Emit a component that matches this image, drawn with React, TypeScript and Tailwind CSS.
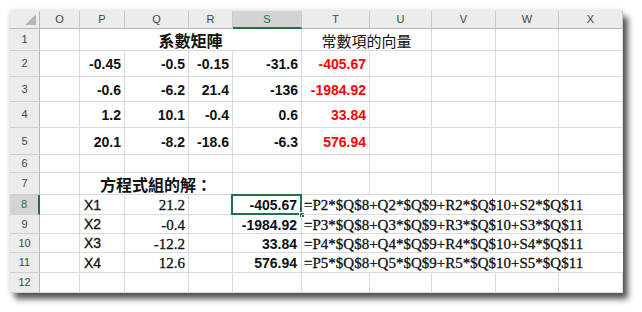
import React from "react";

const sans = "font-['Liberation_Sans',Arial,sans-serif]";
const cjk = "font-['Noto_Sans_CJK_TC','Noto_Sans_CJK_SC',sans-serif]";
const serif = "font-['Liberation_Serif','Times_New_Roman',serif]";

type CellProps = {
  children?: React.ReactNode;
  span?: string;
  cls?: string;
  noRight?: boolean;
};

function Cell({ children, span = "", cls = "", noRight = false }: CellProps) {
  return (
    <div
      className={`relative flex items-center overflow-visible whitespace-nowrap border-b border-[#dadada] ${
        noRight ? "" : "border-r"
      } ${span} ${cls}`}
    >
      {children}
    </div>
  );
}

function ColHead({ label, selected = false }: { label: string; selected?: boolean }) {
  return (
    <div
      className={`flex items-center justify-center text-[11px] ${sans} border-r border-[#c9c9c9] ${
        selected
          ? "bg-[#d4d4d4] text-[#217346] border-b-2 border-b-[#217346]"
          : "bg-[#ececec] text-[#444444] border-b border-b-[#b9b9b9]"
      }`}
    >
      {label}
    </div>
  );
}

function RowHead({ n, selected = false }: { n: number; selected?: boolean }) {
  return (
    <div
      className={`flex items-center justify-center text-[11px] ${sans} border-b border-[#cfcfcf] ${
        selected
          ? "bg-[#d4d4d4] text-[#217346] border-r-2 border-r-[#217346]"
          : "bg-[#ececec] text-[#444444] border-r border-r-[#b9b9b9]"
      }`}
    >
      {n}
    </div>
  );
}

const Num = ({ v, red = false }: { v: string; red?: boolean }) => (
  <Cell cls={`justify-end pr-[3px] pt-[2px] text-[14px] font-bold ${sans} ${red ? "text-[#ff0000]" : "text-[#111111]"}`}>
    {v}
  </Cell>
);

const Empty = () => <Cell />;

const matrix = [
  ["-0.45", "-0.5", "-0.15", "-31.6", "-405.67"],
  ["-0.6", "-6.2", "21.4", "-136", "-1984.92"],
  ["1.2", "10.1", "-0.4", "0.6", "33.84"],
  ["20.1", "-8.2", "-18.6", "-6.3", "576.94"],
];

const sol = [
  ["X1", "21.2", "-405.67", "=P2*$Q$8+Q2*$Q$9+R2*$Q$10+S2*$Q$11"],
  ["X2", "-0.4", "-1984.92", "=P3*$Q$8+Q3*$Q$9+R3*$Q$10+S3*$Q$11"],
  ["X3", "-12.2", "33.84", "=P4*$Q$8+Q4*$Q$9+R4*$Q$10+S4*$Q$11"],
  ["X4", "12.6", "576.94", "=P5*$Q$8+Q5*$Q$9+R5*$Q$10+S5*$Q$11"],
];

export default function App() {
  return (
    <div className="w-[642px] h-[312px] bg-white overflow-hidden pl-[10px] pt-[11px]">
      <div className="w-[613px] h-[282px] bg-white shadow-[5px_6px_6px_rgba(0,0,0,0.65),0_0_5px_rgba(0,0,0,0.18)] grid grid-cols-[30px_40px_45px_64px_44px_69px_68px_62px_64px_63px_64px] grid-rows-[18px_22px_26px_25px_26px_27px_18px_22px_20px_19px_19px_20px_20px]">
        {/* header row */}
        <div className="relative bg-[#ececec] border-r border-b border-[#b9b9b9]">
          <div className="absolute right-[3px] bottom-[3px] w-0 h-0 border-l-[11px] border-l-transparent border-b-[11px] border-b-[#b5b5b5]" />
        </div>
        {["O", "P", "Q", "R", "S", "T", "U", "V", "W", "X"].map((c) => (
          <ColHead key={c} label={c} selected={c === "S"} />
        ))}

        {/* row 1 */}
        <RowHead n={1} />
        <Empty />
        <Cell span="col-span-4" cls={`justify-center text-[16px] font-bold text-[#111] ${cjk}`}>
          系數矩陣
        </Cell>
        <Cell span="col-span-2" cls={`justify-center pt-[3px] text-[15px] text-[#111] ${cjk}`}>
          常數項的向量
        </Cell>
        <Empty />
        <Empty />
        <Empty />

        {/* rows 2-5 */}
        {matrix.map((r, i) => (
          <React.Fragment key={i}>
            <RowHead n={i + 2} />
            <Empty />
            <Num v={r[0]} />
            <Num v={r[1]} />
            <Num v={r[2]} />
            <Num v={r[3]} />
            <Num v={r[4]} red />
            <Empty />
            <Empty />
            <Empty />
            <Empty />
          </React.Fragment>
        ))}

        {/* row 6 */}
        <RowHead n={6} />
        {Array.from({ length: 10 }).map((_, i) => (
          <Empty key={i} />
        ))}

        {/* row 7 */}
        <RowHead n={7} />
        <Empty />
        <Cell span="col-span-3" cls={`justify-center text-[16px] font-bold text-[#111] ${cjk}`}>
          方程式組的解：
        </Cell>
        {Array.from({ length: 6 }).map((_, i) => (
          <Empty key={i} />
        ))}

        {/* rows 8-11 */}
        {sol.map((r, i) => (
          <React.Fragment key={i}>
            <RowHead n={i + 8} selected={i === 0} />
            <Empty />
            <Cell cls={`pl-[4px] pt-[1px] text-[14px] text-[#111] ${sans} [-webkit-text-stroke:0.3px_#111]`}>{r[0]}</Cell>
            <Cell cls={`justify-end pr-[3px] pt-[2px] text-[15px] text-[#111] ${serif} [-webkit-text-stroke:0.3px_#111]`}>{r[1]}</Cell>
            <Empty />
            <Cell cls={`justify-end pr-[4px] pt-[2px] text-[14px] font-bold text-[#111] ${sans}`}>
              {r[2]}
              {i === 0 && (
                <>
                  <div className="absolute left-[-2px] top-[-1px] right-[-1px] bottom-[-1px] border-2 border-[#217346]" />
                  <div className="absolute right-[-4px] bottom-[-4px] w-[6px] h-[6px] bg-[#217346] border border-white" />
                </>
              )}
            </Cell>
            <Cell span="col-span-5" noRight cls={`pl-[2px] pt-[2px] text-[15px] text-[#111] ${serif} [-webkit-text-stroke:0.3px_#111]`}>
              {r[3]}
            </Cell>
          </React.Fragment>
        ))}

        {/* row 12 */}
        <RowHead n={12} />
        {Array.from({ length: 10 }).map((_, i) => (
          <Empty key={i} />
        ))}
      </div>
    </div>
  );
}
